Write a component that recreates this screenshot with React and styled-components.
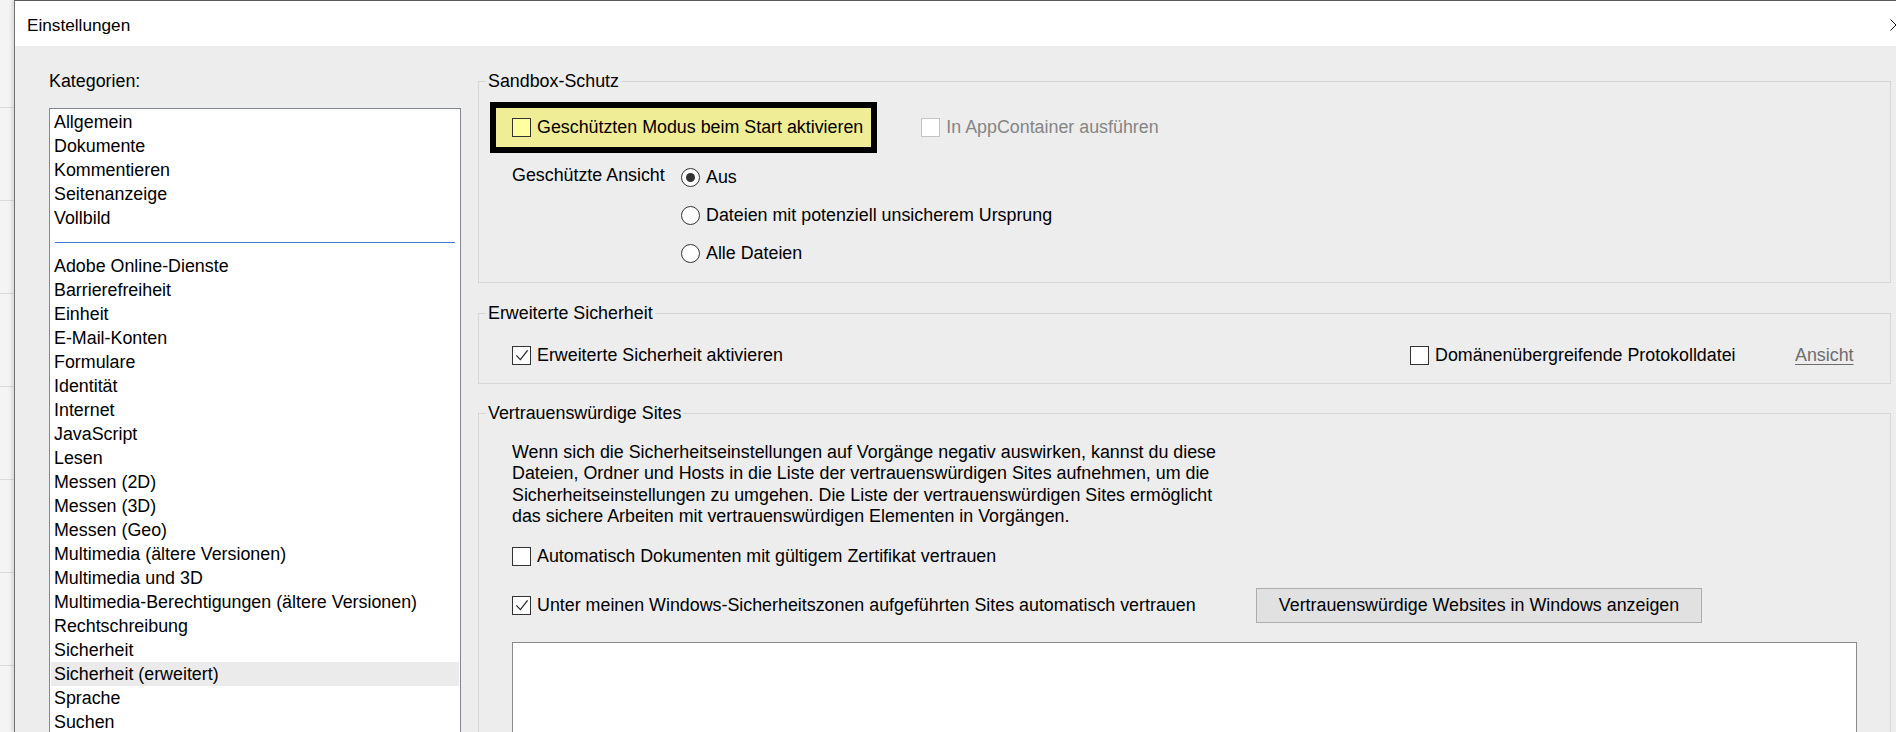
import React from "react";
import styled, { createGlobalStyle } from "styled-components";

const Global = createGlobalStyle`
  *, *::before, *::after { box-sizing: border-box; }
  html, body { margin: 0; padding: 0; width: 1896px; height: 732px; overflow: hidden; background: #f4f4f4; }
  body { font-family: "Liberation Sans", Arial, sans-serif; font-size: 17.85px; color: #000; }
  #root { height: 100%; }
`;

const Screen = styled.div`
  display: flex;
  height: 732px;
  overflow: hidden;
`;

const Backdrop = styled.div`
  flex: 0 0 14px;
  background: #f4f4f4;
  padding-top: 107px;
`;

const BackdropLines = styled.div`
  height: 100%;
  background: repeating-linear-gradient(to bottom, #dadada 0 1px, transparent 1px 93px);
`;

const Window = styled.div`
  flex: 0 0 1900px;
  display: flex;
  flex-direction: column;
  border-left: 1px solid #727272;
  border-top: 1px solid #5c5c5c;
  box-shadow: -2px 0 4px rgba(0, 0, 0, 0.12);
  background: #ededed;
`;

const TitleBar = styled.div`
  height: 45px;
  flex: 0 0 45px;
  background: #fff;
  display: flex;
  align-items: center;
  justify-content: space-between;
  padding: 3px 12px 0 12px;
  font-size: 17.2px;
`;

const CloseGlyph = styled.svg`
  width: 12px;
  height: 12px;
  display: block;
`;

const Body = styled.div`
  flex: 1;
  display: grid;
  grid-template-columns: 412px 1413px;
  column-gap: 17px;
  padding: 25px 0 0 34px;
  align-items: start;
`;

const LeftColumn = styled.div`
  display: flex;
  flex-direction: column;
`;

const CatLabel = styled.div`
  line-height: 20px;
  margin-bottom: 17px;
`;

const ListBox = styled.div`
  background: #fff;
  border: 1px solid #828790;
  padding: 1px 1px 0 1px;
  height: 660px;
  overflow: hidden;
`;

const ListItem = styled.div`
  height: 24px;
  line-height: 24px;
  padding-left: 3px;
  white-space: nowrap;
  background: ${(p) => (p.$selected ? "#ebebeb" : "transparent")};
`;

const ListSeparator = styled.div`
  height: 24px;
  padding: 12px 4px 0 4px;
`;

const SeparatorLine = styled.div`
  height: 1px;
  background: #3a7dd3;
`;

const RightColumn = styled.div`
  display: flex;
  flex-direction: column;
`;

const Group = styled.fieldset`
  margin: 0;
  padding: 0;
  min-width: 0;
  border: 1px solid #d6d6d6;
  margin-top: ${(p) => p.$top || 0}px;
  min-height: ${(p) => p.$minH || 0}px;
`;

const Legend = styled.legend`
  margin-left: 7px;
  padding: 0 2px;
  line-height: 20px;
  font-size: inherit;
`;

const GroupContent = styled.div`
  padding: ${(p) => p.$pad};
`;

const HighlightRow = styled.div`
  display: flex;
  align-items: center;
`;

const Highlight = styled.div`
  display: flex;
  align-items: center;
  gap: 6px;
  height: 51px;
  border: 6px solid #000;
  background: #efed95;
  padding: 0 8px 0 16px;
  white-space: nowrap;
`;

const CheckLabel = styled.label`
  display: flex;
  align-items: center;
  gap: 6px;
  height: 24px;
  white-space: nowrap;
  color: ${(p) => (p.$disabled ? "#858585" : "#000")};
  margin-left: ${(p) => p.$ml || 0}px;
  margin-top: ${(p) => p.$mt || 0}px;
`;

const Box = styled.span`
  flex: 0 0 19px;
  width: 19px;
  height: 19px;
  border: 1px solid ${(p) => (p.$disabled ? "#c4c4c4" : "#333")};
  background: ${(p) => (p.$yellow ? "#ffff9f" : "#fff")};
  display: flex;
  align-items: center;
  justify-content: center;
`;

const CheckMark = styled.svg`
  width: 17px;
  height: 17px;
  display: block;
`;

const ViewGrid = styled.div`
  display: grid;
  grid-template-columns: 169px auto;
  margin: 5px 0 0 22px;
`;

const ViewLabel = styled.div`
  line-height: 20px;
  margin-top: 7px;
  white-space: nowrap;
`;

const RadioList = styled.div`
  display: flex;
  flex-direction: column;
`;

const RadioRow = styled.label`
  height: 38px;
  display: flex;
  align-items: center;
  gap: 6px;
  white-space: nowrap;
`;

const RadioCircle = styled.span`
  width: 19px;
  height: 19px;
  flex: 0 0 19px;
  border: 1px solid #333;
  border-radius: 50%;
  background: #fff;
  display: flex;
  align-items: center;
  justify-content: center;
  &::after {
    content: "";
    width: 9px;
    height: 9px;
    border-radius: 50%;
    background: ${(p) => (p.$on ? "#333" : "transparent")};
  }
`;

const SecurityGrid = styled.div`
  display: grid;
  grid-template-columns: 898px 385px auto;
  align-items: center;
  height: 24px;
`;

const LinkText = styled.span`
  color: #6d6d6d;
  text-decoration: underline;
  text-underline-offset: 3px;
  white-space: nowrap;
`;

const Paragraph = styled.p`
  margin: 0;
  line-height: 21.25px;
  white-space: nowrap;
`;

const ButtonRow = styled.div`
  display: grid;
  grid-template-columns: 744px auto;
  align-items: center;
  height: 35px;
  margin-top: 20px;
`;

const WinButton = styled.button`
  width: 446px;
  height: 35px;
  background: #e1e1e1;
  border: 1px solid #adadad;
  font: inherit;
  color: #000;
  padding: 0;
  white-space: nowrap;
`;

const SiteList = styled.div`
  margin-top: 19px;
  height: 220px;
  background: #fff;
  border: 1px solid #8a8a8a;
`;

const Check = ({ checked, disabled, yellow }) => (
  <Box $disabled={disabled} $yellow={yellow}>
    {checked && (
      <CheckMark viewBox="0 0 17 17">
        <polyline points="3.3,8.4 7.4,12.6 14.6,3.4" fill="none" stroke="#2b2b2b" strokeWidth="1.3" />
      </CheckMark>
    )}
  </Box>
);

const categories = [
  "Allgemein",
  "Dokumente",
  "Kommentieren",
  "Seitenanzeige",
  "Vollbild",
  "---",
  "Adobe Online-Dienste",
  "Barrierefreiheit",
  "Einheit",
  "E-Mail-Konten",
  "Formulare",
  "Identität",
  "Internet",
  "JavaScript",
  "Lesen",
  "Messen (2D)",
  "Messen (3D)",
  "Messen (Geo)",
  "Multimedia (ältere Versionen)",
  "Multimedia und 3D",
  "Multimedia-Berechtigungen (ältere Versionen)",
  "Rechtschreibung",
  "Sicherheit",
  "Sicherheit (erweitert)",
  "Sprache",
  "Suchen",
];

export default function App() {
  return (
    <>
      <Global />
      <Screen>
        <Backdrop>
          <BackdropLines />
        </Backdrop>
        <Window>
          <TitleBar>
            <span>Einstellungen</span>
            <CloseGlyph viewBox="0 0 12 12">
              <path d="M0.5 0.5 L11.5 11.5 M11.5 0.5 L0.5 11.5" stroke="#111" strokeWidth="1" />
            </CloseGlyph>
          </TitleBar>
          <Body>
            <LeftColumn>
              <CatLabel>Kategorien:</CatLabel>
              <ListBox>
                {categories.map((c, i) =>
                  c === "---" ? (
                    <ListSeparator key={i}>
                      <SeparatorLine />
                    </ListSeparator>
                  ) : (
                    <ListItem key={i} $selected={c === "Sicherheit (erweitert)"}>
                      {c}
                    </ListItem>
                  )
                )}
              </ListBox>
            </LeftColumn>

            <RightColumn>
              <Group>
                <Legend>Sandbox-Schutz</Legend>
                <GroupContent $pad="11px 0 10px 11px">
                  <HighlightRow>
                    <Highlight>
                      <Check yellow />
                      <span>Geschützten Modus beim Start aktivieren</span>
                    </Highlight>
                    <CheckLabel $disabled $ml={44}>
                      <Check disabled />
                      <span>In AppContainer ausführen</span>
                    </CheckLabel>
                  </HighlightRow>
                  <ViewGrid>
                    <ViewLabel>Geschützte Ansicht</ViewLabel>
                    <RadioList>
                      <RadioRow>
                        <RadioCircle $on />
                        <span>Aus</span>
                      </RadioRow>
                      <RadioRow>
                        <RadioCircle />
                        <span>Dateien mit potenziell unsicherem Ursprung</span>
                      </RadioRow>
                      <RadioRow>
                        <RadioCircle />
                        <span>Alle Dateien</span>
                      </RadioRow>
                    </RadioList>
                  </ViewGrid>
                </GroupContent>
              </Group>

              <Group $top={20}>
                <Legend>Erweiterte Sicherheit</Legend>
                <GroupContent $pad="20px 0 16px 33px">
                  <SecurityGrid>
                    <CheckLabel>
                      <Check checked />
                      <span>Erweiterte Sicherheit aktivieren</span>
                    </CheckLabel>
                    <CheckLabel>
                      <Check />
                      <span>Domänenübergreifende Protokolldatei</span>
                    </CheckLabel>
                    <LinkText>Ansicht</LinkText>
                  </SecurityGrid>
                </GroupContent>
              </Group>

              <Group $top={19} $minH={400}>
                <Legend>Vertrauenswürdige Sites</Legend>
                <GroupContent $pad="19px 33px 0 33px">
                  <Paragraph>
                    Wenn sich die Sicherheitseinstellungen auf Vorgänge negativ auswirken, kannst du diese
                    <br />
                    Dateien, Ordner und Hosts in die Liste der vertrauenswürdigen Sites aufnehmen, um die
                    <br />
                    Sicherheitseinstellungen zu umgehen. Die Liste der vertrauenswürdigen Sites ermöglicht
                    <br />
                    das sichere Arbeiten mit vertrauenswürdigen Elementen in Vorgängen.
                  </Paragraph>
                  <CheckLabel $mt={17}>
                    <Check />
                    <span>Automatisch Dokumenten mit gültigem Zertifikat vertrauen</span>
                  </CheckLabel>
                  <ButtonRow>
                    <CheckLabel>
                      <Check checked />
                      <span>Unter meinen Windows-Sicherheitszonen aufgeführten Sites automatisch vertrauen</span>
                    </CheckLabel>
                    <WinButton type="button">Vertrauenswürdige Websites in Windows anzeigen</WinButton>
                  </ButtonRow>
                  <SiteList />
                </GroupContent>
              </Group>
            </RightColumn>
          </Body>
        </Window>
      </Screen>
    </>
  );
}
